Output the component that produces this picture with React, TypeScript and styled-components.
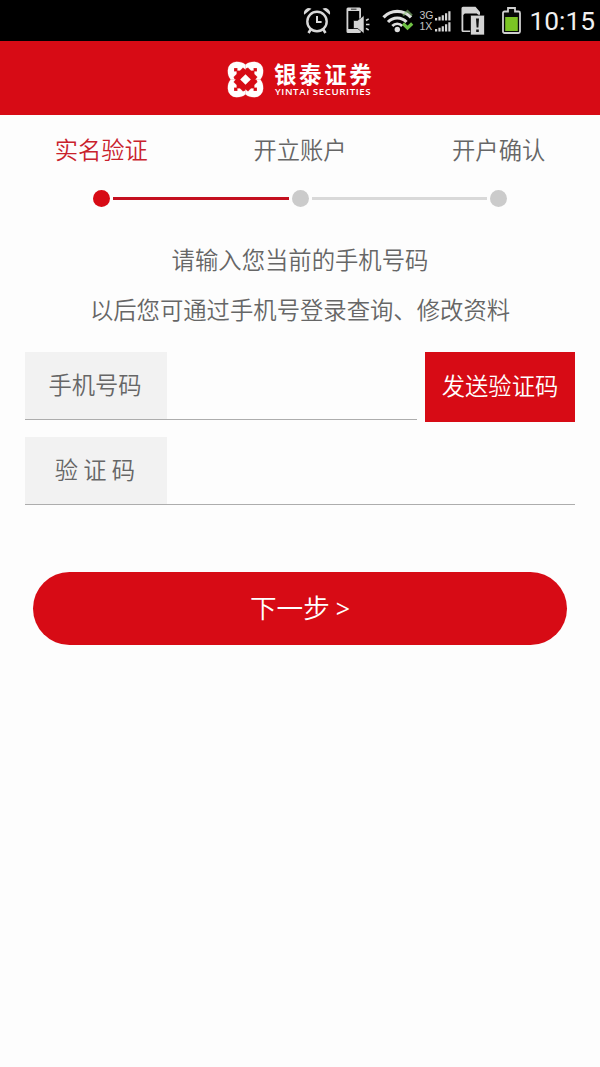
import React from "react";
import styled, { createGlobalStyle } from "styled-components";

const RED = "#d70b15";

const GlobalStyle = createGlobalStyle`
  * { box-sizing: border-box; }
  body {
    margin: 0;
    background: #fdfdfd;
    font-family: "Noto Sans CJK SC", sans-serif;
    font-weight: 350;
  }
`;

const Screen = styled.div`
  width: 600px;
  height: 1067px;
  display: flex;
  flex-direction: column;
  overflow: hidden;
`;

const StatusBar = styled.div`
  height: 41px;
  flex: none;
  display: flex;
  align-items: center;
  justify-content: flex-end;
  padding-right: 5.5px;
  background: #000;
  color: #e6e6e6;
  svg { display: block; flex: none; }
`;

const Slot = styled.div<{ $gap: number }>`
  margin-right: ${(p) => p.$gap}px;
`;

const Network = styled.div`
  display: grid;
  grid-template-columns: 15px 16px;
  row-gap: 0;
  align-items: center;
  font: 400 10.5px/11px "Liberation Sans", sans-serif;
  color: #c4c4c4;
  padding-top: 1px;
`;

const Clock = styled.div`
  width: 65px;
  text-align: right;
  white-space: nowrap;
  font: 400 26.3px/41px Roboto, sans-serif;
  color: #f0f0f0;
  padding-top: 1px;
`;

const Header = styled.header`
  height: 74px;
  flex: none;
  display: flex;
  align-items: center;
  justify-content: center;
  gap: 10px;
  padding-top: 2px;
  background: ${RED};
  color: #fff;
  svg { display: block; }
`;

const Brand = styled.div`
  display: flex;
  flex-direction: column;
  width: 99px;
`;

const BrandName = styled.div`
  font-size: 22.5px;
  font-weight: 700;
  line-height: 24px;
  letter-spacing: 2.6px;
  white-space: nowrap;
`;

const BrandLatin = styled.div`
  font: 600 9.7px/10px "Open Sans", sans-serif;
  letter-spacing: 0.6px;
  white-space: nowrap;
  padding: 2px 0 0 1px;
`;

const Steps = styled.ol`
  list-style: none;
  display: grid;
  grid-template-columns: repeat(3, 1fr);
  margin: 0;
  padding: 17px 2px 0;
`;

const Step = styled.li<{ $active?: boolean }>`
  text-align: center;
  font-size: 23.3px;
  line-height: 35px;
  color: ${(p) => (p.$active ? "#c9222c" : "#666")};
`;

const Track = styled.div`
  display: flex;
  align-items: center;
  justify-content: center;
  gap: 3px;
  margin-top: 23px;
`;

const Dot = styled.span<{ $active?: boolean }>`
  width: 17px;
  height: 17px;
  border-radius: 50%;
  background: ${(p) => (p.$active ? RED : "#cbcbcb")};
`;

const Line = styled.span<{ $active?: boolean }>`
  width: 175.3px;
  height: 3px;
  background: ${(p) => (p.$active ? "#c4101f" : "#d9d9d9")};
`;

const Intro = styled.p`
  margin: 27px 0 0;
  text-align: center;
  font-size: 23.35px;
  line-height: 50px;
  color: #666;
`;

const Form = styled.form`
  display: flex;
  flex-direction: column;
  gap: 15px;
  margin: 18px 25px 0;
`;

const Row = styled.div`
  display: flex;
  align-items: flex-start;
  gap: 8px;
`;

const Field = styled.label`
  flex: 1;
  min-width: 0;
  height: 68px;
  display: flex;
  border-bottom: 1px solid #adadad;
`;

const FieldName = styled.span`
  width: 142px;
  padding-right: 2px;
  flex: none;
  background: #f2f2f2;
  color: #666;
  text-align: center;
  font-size: 23.3px;
  line-height: 65px;
`;

const Input = styled.input`
  flex: 1;
  min-width: 0;
  border: 0;
  outline: 0;
  background: transparent;
  padding: 0 12px;
  font: inherit;
  font-size: 23px;
`;

const SendButton = styled.button`
  flex: none;
  width: 150px;
  height: 70px;
  padding: 0 0 5px;
  border: 0;
  background: ${RED};
  color: #fff;
  font: 350 23.3px "Noto Sans CJK SC", sans-serif;
  white-space: nowrap;
`;

const NextButton = styled.button`
  height: 73px;
  margin: 52px 8px 0;
  padding: 0 0 4px;
  border: 0;
  border-radius: 37px;
  background: ${RED};
  color: #fff;
  font: 350 26.6px "Noto Sans CJK SC", sans-serif;
`;

const Arrow = styled.span`
  font: 400 25px "Open Sans", sans-serif;
`;

const AlarmIcon = () => (
  <svg width="28" height="27" viewBox="0 0 28 27" fill="none" stroke="#d8d8d8">
    <circle cx="14" cy="14.5" r="9.7" strokeWidth="2.4" />
    <path d="M14 9v6h4.6" strokeWidth="2" />
    <path d="M7.7 22.5 5.5 26M20.3 22.5l2.2 3.500" strokeWidth="2.6" />
    <path d="M1.200 7.700A5 5 0 0 1 8.500 1.800zM26.800 7.700A5 5 0 0 0 19.500 1.800z" fill="#d8d8d8" stroke="none" />
  </svg>
);

const PhoneSoundIcon = () => (
  <svg width="24" height="27" viewBox="0 0 24 27" fill="none">
    <path fillRule="evenodd" fill="#d4d4d4" d="M2 .5h11.500a1.500 1.500 0 0 1 1.500 1.500v22.500a1.500 1.500 0 0 1-1.500 1.500H2a1.500 1.500 0 0 1-1.500-1.500V2A1.500 1.500 0 0 1 2 .5zM2.300 4v18h10.900V4z" />
    <path d="M5 2.200h5.500" stroke="#333" />
    <path d="M7.500 13.500h4L18 8.500v18l-6.500-5h-4z" fill="#d4d4d4" stroke="#000" strokeWidth=".6" />
    <path d="m20 13.500 2.700-1.700M20 17.500h3.500M20 21.300l2.700 1.700" stroke="#d4d4d4" strokeWidth="1.500" />
  </svg>
);

const WifiIcon = () => (
  <svg width="32" height="24" viewBox="0 0 32 24" fill="none">
    <path d="M1.500 8.300C9 .3 21.500.3 29 8.300" stroke="#dedede" strokeWidth="3.200" />
    <path d="M6 13C11 7.500 19.500 7.500 24.500 13" stroke="#dedede" strokeWidth="3" />
    <path d="M10.300 17C13 14 17.500 14 20.200 17" stroke="#dedede" strokeWidth="2.700" />
    <circle cx="15.300" cy="20.500" r="2.700" fill="#dedede" />
    <path d="m21 6.500 4.500-4.500 4.500 4.500" stroke="#8fc47c" strokeWidth="2.200" opacity=".6" />
    <path d="m21 14.500 4.500 4.500 4.700-4.500" stroke="#6fc244" strokeWidth="3.200" />
  </svg>
);

const SignalIcon = () => (
  <svg width="16" height="10" viewBox="0 0 16 10" fill="#d6d6d6">
    <path d="M0 7h2.200v2.500H0zM3.400 5.700h2.200v3.800H3.400zM6.700 4.200h2.200v5.300H6.700zM10 2.300h2.200v7.200H10zM13.300.3h2.200v9.200h-2.200z" />
  </svg>
);

const SimAlertIcon = () => (
  <svg width="24" height="30" viewBox="0 0 24 30">
    <path fillRule="evenodd" fill="#d4d4d4" d="M2 .8h12.500L19 6v20H2A1.500 1.500 0 0 1 .5 24.500V2.300A1.500 1.500 0 0 1 2 .8zM2.300 9v15.500h15V9l-1.500-1.500H3.800z" />
    <path d="M9.500 9.200h14v19.800h-14z" fill="#d4d4d4" stroke="#000" strokeWidth=".7" />
    <path d="M15 12.500h3l-.6 9h-1.800zM15.200 23.500h2.600v2.600h-2.600z" fill="#111" />
  </svg>
);

const BatteryIcon = () => (
  <svg width="19" height="27" viewBox="0 0 19 27">
    <path d="M6 1h7v3.500h3.500A1.500 1.500 0 0 1 18 6v18.500a1.500 1.500 0 0 1-1.500 1.500h-14A1.500 1.500 0 0 1 1 24.500V6a1.500 1.500 0 0 1 1.500-1.500H6z" fill="#070907" stroke="#cfcfcf" strokeWidth="1.800" />
    <path d="M3.200 10h12.600v14H3.200z" fill="#7bc424" />
  </svg>
);

const QUARTERS = [0, 90, 180, 270];

const LogoIcon = () => (
  <svg width="37" height="37" viewBox="-18.500 -18.500 37 37" fill="#fff">
    {QUARTERS.map((angle) => (
      <path
        key={angle}
        transform={`rotate(${angle})`}
        d="M0-14.800C-2.500-17-5-17.700-9-17.700A8.700 8.700 0 0 0-17.700-9C-17.700-5-17-2.500-14.800 0L-11 0L-12-2.500L-9-5.500V-8H-11.500L-11.500-11.500H-8V-9H-5.500L-2.500-12L0-10z"
        stroke="#fff"
        strokeWidth=".2"
      />
    ))}
    <path d="M0-5.300 5.300 0 0 5.300-5.300 0z" />
  </svg>
);

export default function App() {
  return (
    <Screen>
      <GlobalStyle />
      <StatusBar>
        <Slot $gap={15}><AlarmIcon /></Slot>
        <Slot $gap={12}><PhoneSoundIcon /></Slot>
        <Slot $gap={6}><WifiIcon /></Slot>
        <Slot $gap={10}>
          <Network>
            <span>3G</span><SignalIcon />
            <span>1X</span><SignalIcon />
          </Network>
        </Slot>
        <Slot $gap={17}><SimAlertIcon /></Slot>
        <Slot $gap={9}><BatteryIcon /></Slot>
        <Clock>10:15</Clock>
      </StatusBar>
      <Header>
        <LogoIcon />
        <Brand>
          <BrandName>银泰证券</BrandName>
          <BrandLatin>YINTAI SECURITIES</BrandLatin>
        </Brand>
      </Header>
      <Steps>
        <Step $active>实名验证</Step>
        <Step>开立账户</Step>
        <Step>开户确认</Step>
      </Steps>
      <Track>
        <Dot $active />
        <Line $active />
        <Dot />
        <Line />
        <Dot />
      </Track>
      <Intro>
        请输入您当前的手机号码
        <br />
        以后您可通过手机号登录查询、修改资料
      </Intro>
      <Form>
        <Row>
          <Field>
            <FieldName>手机号码</FieldName>
            <Input type="tel" />
          </Field>
          <SendButton type="button">发送验证码</SendButton>
        </Row>
        <Row>
          <Field>
            <FieldName>验 证 码</FieldName>
            <Input type="text" />
          </Field>
        </Row>
        <NextButton type="button">下一步 <Arrow>&gt;</Arrow></NextButton>
      </Form>
    </Screen>
  );
}
